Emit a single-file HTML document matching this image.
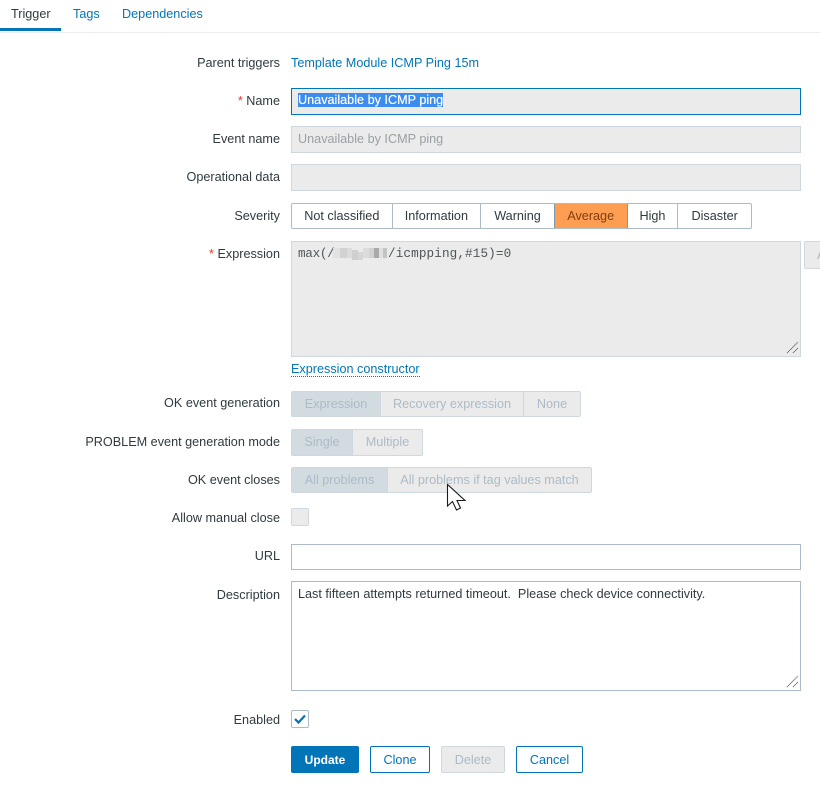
<!DOCTYPE html>
<html><head><meta charset="utf-8"><style>
html,body{margin:0;padding:0;background:#fff}
body{width:820px;height:786px;position:relative;overflow:hidden;font-family:"Liberation Sans",Arial,sans-serif;font-size:12.65px;color:#2f3a40}
.a{position:absolute;white-space:nowrap}
.l{position:absolute;right:540px;white-space:nowrap;color:#2f3a40;line-height:16px}
.blue{color:#0275b8}
.in{position:absolute;left:291px;width:508px;border:1px solid #acbbc7;background:#fff;box-sizing:content-box}
.ro{background:#ebebeb;border-color:#cfd8de;color:#9aa0a4}
.txt{position:absolute;left:298px;line-height:16px;white-space:nowrap}
.seg{position:absolute;display:flex;box-sizing:border-box;border:1px solid #acbbc7;border-radius:2px;overflow:hidden}
.seg div{box-sizing:border-box;text-align:center;border-right:1px solid #acbbc7;height:100%;line-height:25px;white-space:nowrap}
.seg div:last-child{border-right:0}
.dis{border-color:#cfd8de;background:#ebebeb;color:#acbbc7}
.dis div{border-right-color:#cfd8de}
.dis div.on{background:#d2dbe0}
.btn{position:absolute;top:746px;height:27px;box-sizing:border-box;border:1px solid #0275b8;border-radius:2px;text-align:center;line-height:26px;color:#0275b8;background:#fff}
.cb{position:absolute;left:291px;width:18px;height:18px;box-sizing:border-box;border:1px solid #acbbc7;border-radius:2px}
.mono{font-family:'Liberation Mono',monospace;font-size:12.65px;color:#4f5659}
</style></head><body>
<div class="a" style="left:11px;top:6px;line-height:16px">Trigger</div>
<div class="a blue" style="left:73px;top:6px;line-height:16px">Tags</div>
<div class="a blue" style="left:122px;top:6px;line-height:16px">Dependencies</div>
<div class="a" style="left:0;top:28px;width:61px;height:3px;background:#0275b8"></div>
<div class="a" style="left:0;top:32px;width:820px;height:1px;background:#ebeef0"></div>

<div class="l" style="top:55px">Parent triggers</div>
<div class="a blue" style="left:291px;top:55px;line-height:16px">Template Module ICMP Ping 15m</div>

<div class="l" style="top:93px"><span style="color:#e33734">*</span> Name</div>
<div class="in ro" style="top:88px;height:25px;border-color:#0275b8"></div>
<div class="txt" style="top:93px;color:#fff;background:#3c8cf0;line-height:14px;text-shadow:0 0 .4px #fff">Unavailable by ICMP ping</div>

<div class="l" style="top:131px">Event name</div>
<div class="in ro" style="top:126px;height:25px"></div>
<div class="txt" style="top:131px;color:#9aa0a4">Unavailable by ICMP ping</div>

<div class="l" style="top:169px">Operational data</div>
<div class="in ro" style="top:164px;height:25px"></div>

<div class="l" style="top:208px">Severity</div>
<div class="seg" style="left:291px;top:203px;width:461px;height:26px">
<div style="width:101px">Not classified</div><div style="width:89px">Information</div><div style="width:74px">Warning</div><div style="width:74px;background:#ff9d52;color:#7d3f10;border-left:1px solid #7f9aad;margin-left:-1px;border-right-color:#7f9aad">Average</div><div style="width:51px">High</div><div style="width:73px">Disaster</div>
</div>

<div class="l" style="top:246px"><span style="color:#e33734">*</span> Expression</div>
<div class="in ro" style="top:241px;height:114px"></div>
<div class="txt mono" style="top:246px;letter-spacing:-.3px">max(/</div>
<div class="txt mono" style="left:388px;top:246px;letter-spacing:.12px">/icmpping,#15)=0</div>
<svg class="a" style="left:333px;top:247px" width="56" height="14"><rect x="0" y="1" width="7" height="10" fill="#e2e2e2"/><rect x="7" y="1" width="7" height="10" fill="#d2d2d2"/><rect x="14" y="1" width="5" height="10" fill="#dcdcdc"/><rect x="19" y="3" width="6" height="10" fill="#cfcfcf"/><rect x="25" y="5" width="5" height="8" fill="#d6d6d6"/><rect x="30" y="1" width="6" height="10" fill="#dcdcdc"/><rect x="36" y="1" width="5" height="10" fill="#d2d2d2"/><rect x="41" y="1" width="5" height="10" fill="#a9a9a9"/><rect x="46" y="1" width="4" height="10" fill="#e0e0e0"/><rect x="50" y="1" width="4" height="10" fill="#c4c4c4"/></svg>
<svg class="a" style="left:784px;top:339px" width="16" height="16" fill="none" stroke="#55595c" stroke-width="1" stroke-dasharray="1 .5"><path d="M3 14L14 3M9 14L14 9"/></svg>
<div class="a" style="left:804px;top:241px;width:30px;height:28px;box-sizing:border-box;border:1px solid #cfd8de;border-radius:2px;background:#ebebeb;color:#acbbc7;line-height:26px;padding-left:12px">A</div>
<div class="a blue" style="left:291px;top:363px;line-height:13px;border-bottom:1px dotted #0275b8">Expression constructor</div>

<div class="l" style="top:395px">OK event generation</div>
<div class="seg dis" style="left:291px;top:391px;width:290px;height:26px">
<div class="on" style="width:89px">Expression</div><div style="width:143px">Recovery expression</div><div style="width:56px">None</div>
</div>

<div class="l" style="top:434px">PROBLEM event generation mode</div>
<div class="seg dis" style="left:291px;top:429px;width:132px;height:27px">
<div class="on" style="width:61px">Single</div><div style="width:69px">Multiple</div>
</div>

<div class="l" style="top:472px">OK event closes</div>
<div class="seg dis" style="left:291px;top:467px;width:301px;height:26px">
<div class="on" style="width:96px">All problems</div><div style="width:203px">All problems if tag values match</div>
</div>

<div class="l" style="top:510px">Allow manual close</div>
<div class="cb" style="top:508px;background:#ebebeb;border-color:#cfd8de"></div>

<div class="l" style="top:548px">URL</div>
<div class="in" style="top:544px;height:24px"></div>

<div class="l" style="top:587px">Description</div>
<div class="in" style="top:581px;height:108px"></div>
<div class="txt" style="top:586px;white-space:pre">Last fifteen attempts returned timeout.  Please check device connectivity.</div>
<svg class="a" style="left:784px;top:673px" width="16" height="16" fill="none" stroke="#55595c" stroke-width="1" stroke-dasharray="1 .5"><path d="M3 14L14 3M9 14L14 9"/></svg>

<div class="l" style="top:712px">Enabled</div>
<div class="cb" style="top:710px;background:#fff"><svg width="16" height="16" style="display:block" fill="none" stroke="#0275b8" stroke-width="2.2"><path d="M3 8L6.5 11.5L13 4.5"/></svg></div>

<div class="btn" style="left:291px;width:68px;background:#0275b8;color:#fff;font-weight:bold;font-size:12px">Update</div>
<div class="btn" style="left:370px;width:60px">Clone</div>
<div class="btn" style="left:441px;width:64px;background:#ebebeb;border-color:#cfd8de;color:#acbbc7">Delete</div>
<div class="btn" style="left:516px;width:67px">Cancel</div>

<svg class="a" style="left:446px;top:483px" width="24" height="30"><path d="M1.5 1.5V23L6.5 18.5L10.5 27L14.5 25L11 17.5H19Z" fill="#fff" stroke="#1a1a1a" stroke-width="1.1" stroke-linejoin="miter"/></svg>
</body></html>
